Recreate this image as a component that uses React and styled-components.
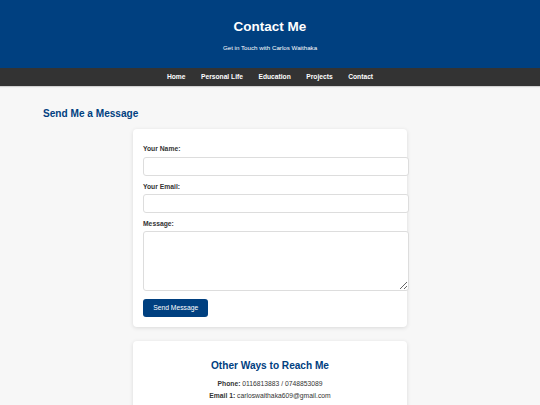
import React from "react";
import styled, { createGlobalStyle } from "styled-components";

const Global = createGlobalStyle`
  html, body { margin: 0; padding: 0; }
  body {
    background: #f7f7f7;
    font-family: "Liberation Sans", Arial, sans-serif;
    font-size: 6.75px;
    color: #333;
  }
`;

const Header = styled.header`
  background: #004080;
  color: #fff;
  text-align: center;
  height: 68px;
  box-sizing: border-box;
  padding-top: 19px;
`;

const Title = styled.h1`
  margin: 0;
  font-size: 13.5px;
  line-height: 16px;
  font-weight: bold;
`;

const Subtitle = styled.p`
  margin: 9px 0 0;
  font-size: 6.2px;
  line-height: 7px;
`;

const Nav = styled.nav`
  background: #333;
  height: 18px;
  display: flex;
  justify-content: center;
  align-items: center;
  gap: 15.5px;
  box-shadow: 0 1px 1px rgba(0, 0, 0, 0.15);
`;

const NavLink = styled.a`
  color: #fff;
  font-weight: bold;
  font-size: 6.7px;
  line-height: 8px;
  text-decoration: none;
`;

const Main = styled.main`
  padding: 22px 43px 20px;
`;

const SectionTitle = styled.h2`
  margin: 0 0 ${(p) => (p.$center ? 8 : 9)}px;
  font-size: 10.1px;
  line-height: 12px;
  color: #004080;
  font-weight: bold;
  text-align: ${(p) => (p.$center ? "center" : "left")};
`;

const Card = styled.section`
  width: 274px;
  box-sizing: border-box;
  margin: 0 auto ${(p) => p.$gap || 0}px;
  background: #fff;
  border-radius: 4px;
  box-shadow: 0 1px 4px rgba(0, 0, 0, 0.12);
  padding: ${(p) => p.$pad};
`;

const Form = styled.form`
  display: flex;
  flex-direction: column;
  align-items: flex-start;
`;

const Label = styled.label`
  display: block;
  font-weight: bold;
  font-size: 6.75px;
  line-height: 8px;
  margin-bottom: 3.5px;
  color: #333;
`;

const Input = styled.input`
  height: 19px;
  box-sizing: border-box;
  width: 266px;
  border: 1px solid #ddd;
  border-radius: 3px;
  padding: 4px;
  font-family: inherit;
  font-size: 6.75px;
  margin: 0 0 7px;
  background: #fff;
`;

const TextArea = styled.textarea`
  width: 266px;
  height: 60px;
  box-sizing: border-box;
  border: 1px solid #ddd;
  border-radius: 3px;
  padding: 4px;
  font-family: inherit;
  font-size: 6.75px;
  margin: -1px 0 8px;
  display: block;
  resize: vertical;
`;

const Button = styled.button`
  background: #004080;
  color: #fff;
  border: none;
  border-radius: 3px;
  font-family: inherit;
  font-size: 6.75px;
  line-height: 8px;
  padding: 5.3px 10.2px;
  cursor: pointer;
`;

const InfoLine = styled.p`
  margin: 0 0 4.4px;
  text-align: center;
  font-size: 6.75px;
  line-height: 8px;
  color: #333;
  & strong { font-weight: bold; }
`;

export default function App() {
  return (
    <>
      <Global />
      <Header>
        <Title>Contact Me</Title>
        <Subtitle>Get in Touch with Carlos Waithaka</Subtitle>
      </Header>
      <Nav>
        <NavLink href="#">Home</NavLink>
        <NavLink href="#">Personal Life</NavLink>
        <NavLink href="#">Education</NavLink>
        <NavLink href="#">Projects</NavLink>
        <NavLink href="#">Contact</NavLink>
      </Nav>
      <Main>
        <SectionTitle>Send Me a Message</SectionTitle>
        <Card $pad="16px 10px 10px" $gap={14}>
          <Form onSubmit={(e) => e.preventDefault()}>
            <Label htmlFor="name">Your Name:</Label>
            <Input id="name" type="text" />
            <Label htmlFor="email">Your Email:</Label>
            <Input id="email" type="email" />
            <Label htmlFor="msg">Message:</Label>
            <TextArea id="msg" />
            <Button type="submit">Send Message</Button>
          </Form>
        </Card>
        <Card $pad="19px 10px 10px">
          <SectionTitle $center>Other Ways to Reach Me</SectionTitle>
          <InfoLine>
            <strong>Phone:</strong> 0116813883 / 0748853089
          </InfoLine>
          <InfoLine>
            <strong>Email 1:</strong> carloswaithaka609@gmail.com
          </InfoLine>
        </Card>
      </Main>
    </>
  );
}
